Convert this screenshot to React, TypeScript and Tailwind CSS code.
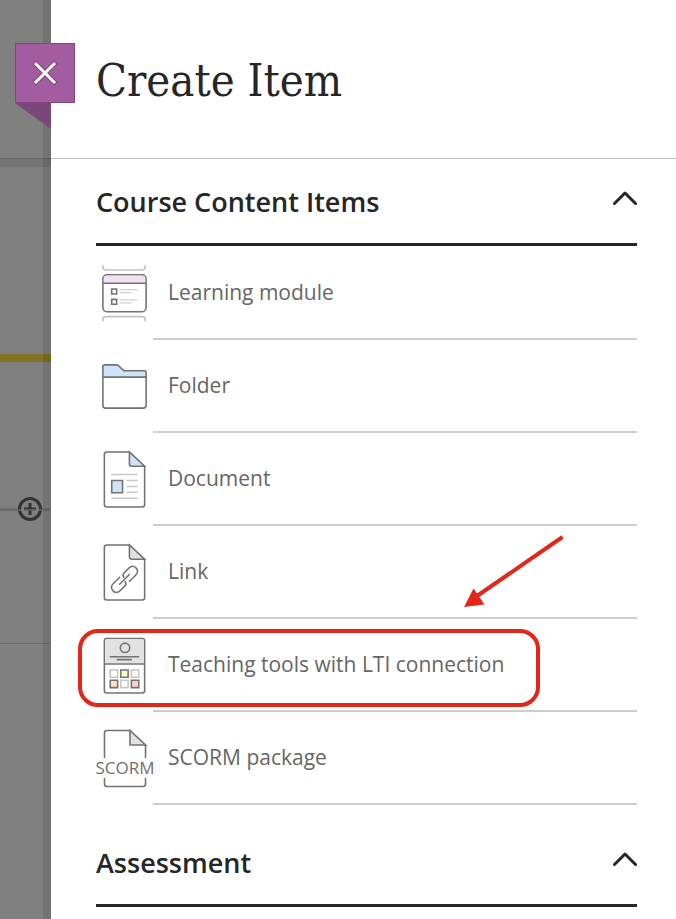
import type { ReactNode } from 'react'

interface Item {
  label: string
  icon: ReactNode
  highlighted?: boolean
}

const LearningModuleIcon = () => (
  <svg width="58" height="60" viewBox="0 0 58 60" fill="none" stroke="#737373" strokeWidth="1.600" aria-hidden="true">
    <path d="M7 .5v2q0 3 3 3h37q3 0 3-3v-2M7 58v-2q0-3 3-3h37q3 0 3 3v2" stroke="#c4c4c4" />
    <rect x="7" y="10.500" width="44" height="37.500" rx="4" fill="#fff" />
    <path d="M8 18.500V14q0-2.600 2.600-2.600h36.800q2.600 0 2.600 2.600v4.500z" fill="#f1e0f4" stroke="none" />
    <path d="M7 19h44" />
    <path d="M16 25h5v5h-5zM16 35.500h5v5h-5z" />
    <path d="M24 25.500h18M24 28.500h12M24 36h18M24 39h12" stroke="#cfcfcf" strokeWidth="1.300" />
  </svg>
)

const FolderIcon = () => (
  <svg width="58" height="60" viewBox="0 0 58 60" fill="none" stroke="#737373" strokeWidth="1.600" aria-hidden="true">
    <path d="M7 20V9.500q0-2 2-2h11q2 0 3 1l5.500 5H49q2 0 2 2V20z" fill="#cfe3fb" />
    <path d="M7 20h44v28.500q0 3-3 3H10q-3 0-3-3z" fill="#fff" />
  </svg>
)

const DocumentIcon = () => (
  <svg width="58" height="60" viewBox="0 0 58 60" fill="none" stroke="#737373" strokeWidth="1.600" aria-hidden="true">
    <path d="M34 1.500H11Q8.500 1.500 8.500 4v51q0 2.500 2.500 2.500h36q2.500 0 2.500-2.500V16.500z" fill="#fff" />
    <path d="M34 1.500v12q0 2.500 2.500 2.500h13z" fill="#cfe3fb" />
    <path d="M15.500 24.500h27M31 30.500h11.500M31 36.500h11.500M31 42.500h11.500M15.500 48.500h27" stroke="#c9c9c9" strokeWidth="1.500" />
    <path d="M16 30.500h11V43H16z" fill="#cfe3fb" />
  </svg>
)

const LinkIcon = () => (
  <svg width="58" height="60" viewBox="0 0 58 60" fill="none" stroke="#737373" strokeWidth="1.600" aria-hidden="true">
    <path d="M34 1.500H11Q8.500 1.500 8.500 4v51q0 2.500 2.500 2.500h36q2.500 0 2.500-2.500V16.500z" fill="#fff" />
    <path d="M34 1.500v12q0 2.500 2.500 2.500h13z" fill="#e2e2e2" />
    <g transform="translate(29 36.500) rotate(-45)" strokeLinecap="round">
      <path d="M-2-5H-11q-5.500 0-5.500 5t5.500 5h6q3.500 0 4-3" />
      <path d="M2 5h9q5.500 0 5.500-5t-5.500-5H5q-3.500 0-4 3" />
      <path d="M-7 0H7" />
    </g>
  </svg>
)

const LtiIcon = () => (
  <svg width="58" height="60" viewBox="0 0 58 60" fill="none" stroke="#737373" strokeWidth="1.600" aria-hidden="true">
    <rect x="8.500" y="2" width="41" height="55.500" rx="2.500" fill="#fff" />
    <path d="M9.300 27.500V4q0-1.200 1.200-1.200h37q1.200 0 1.200 1.200v23.500z" fill="#e2e2e2" stroke="none" />
    <path d="M8.500 28h41M14 20.500h30M21 23.500h15.500" />
    <circle cx="29.500" cy="11.500" r="4.800" />
    <path d="M14.500 34h7.500v7.500h-7.500zM36 34h7.500v7.500H36zM25.200 44.500h7.500V52h-7.500z" stroke="#c4c4c4" />
    <path d="M25.200 34h7.500v7.500h-7.500z" fill="#fdfcc8" />
    <path d="M14.500 44.500h7.500V52h-7.500z" fill="#fde3c4" />
    <path d="M36 44.500h7.500V52H36z" fill="#fdd0d4" />
  </svg>
)

const ScormIcon = () => (
  <svg
    width="58"
    height="60"
    viewBox="0 0 58 60"
    fill="none"
    stroke="#737373"
    strokeWidth="1.600"
    className="shrink-0 overflow-visible"
    aria-hidden="true"
  >
    <path d="M8.500 29V4q0-2.500 2.500-2.500h23l15.500 15V29M8.500 49v6q0 2.500 2.500 2.500h36q2.500 0 2.500-2.500v-6" />
    <path d="M34 1.500V16h15.500z" fill="#e2e2e2" />
    <text x="29" y="45" textAnchor="middle" fontSize="17" fill="#6f6f6f" stroke="none">SCORM</text>
  </svg>
)

const contentItems: Item[] = [
  { label: 'Learning module', icon: <LearningModuleIcon /> },
  { label: 'Folder', icon: <FolderIcon /> },
  { label: 'Document', icon: <DocumentIcon /> },
  { label: 'Link', icon: <LinkIcon /> },
  { label: 'Teaching tools with LTI connection', icon: <LtiIcon />, highlighted: true },
  { label: 'SCORM package', icon: <ScormIcon /> },
]

function SectionHeader({ title }: { title: string }) {
  return (
    <h2 className="border-b-3 border-[#262626]">
      <button
        type="button"
        aria-expanded="true"
        className="flex h-21 w-full items-center justify-between pt-0.5 text-left text-[27px] font-semibold text-[#262626]"
      >
        {title}
        <svg className="mb-2" width="24" height="16" viewBox="0 0 24 16" fill="none" aria-hidden="true">
          <path d="M1.500 13.500 12 3l10.500 10.500" stroke="#262626" strokeWidth="3" strokeLinecap="round" strokeLinejoin="round" />
        </svg>
      </button>
    </h2>
  )
}

function Callout() {
  return (
    <>
      <div className="pointer-events-none absolute -left-[18px] top-[10px] h-[78px] w-[462px] rounded-[20px] border-4 border-[#e22718]" />
      <svg
        className="pointer-events-none absolute left-[368px] -top-[84px]"
        width="102"
        height="76"
        viewBox="0 0 102 76"
        aria-hidden="true"
      >
        <path d="M98.500 2 13 61" stroke="#e22718" strokeWidth="4" />
        <path d="M0 72 9.500 53.500 20.500 69.500z" fill="#e22718" />
      </svg>
    </>
  )
}

function ItemRow({ item }: { item: Item }) {
  return (
    <li className="relative">
      <button type="button" className="flex w-full items-stretch text-left">
        <span className="flex w-[57px] shrink-0 items-center">{item.icon}</span>
        <span className="flex h-[93px] flex-1 items-center border-b-2 border-[#cdcdcd] pl-[15px] text-[21px] text-[#666]">
          {item.label}
        </span>
      </button>
      {item.highlighted && <Callout />}
    </li>
  )
}

// Dimmed course page that stays visible beside the panel
function Backdrop() {
  return (
    <div className="relative flex w-[51px] shrink-0 flex-col bg-[#808080]" aria-hidden="true">
      <div className="h-[158px]" />
      <div className="h-[9px] border-t border-[#666] bg-[#747474]" />
      <div className="h-[187px]" />
      <div className="h-2 bg-[#807323]" />
      <div className="mt-[135px] flex h-6 items-center">
        <div className="flex h-[3px] flex-1 items-center bg-[#6c6c6c] pl-[18px]">
          <svg width="24" height="24" viewBox="0 0 24 24" fill="none" stroke="#333" className="shrink-0">
            <circle cx="12" cy="12" r="10.500" strokeWidth="3" fill="#808080" />
            <path d="M6 12h12M12 6v12" strokeWidth="3" />
            <path d="M0 13h24" stroke="#808080" strokeWidth="1" />
          </svg>
        </div>
      </div>
      <div className="mt-[122px] h-px bg-[#6c6c6c]" />
      <div className="absolute inset-y-0 right-0 w-2 bg-black/10" />
    </div>
  )
}

export default function App() {
  return (
    <div className="flex min-h-screen bg-white font-['Open_Sans','Noto_Sans',sans-serif]">
      <Backdrop />
      <main className="min-w-0 flex-1">
        <header className="relative flex h-[159px] items-center border-b border-[#bdbdbd] pl-[45px] pt-1">
          <button
            type="button"
            aria-label="Close"
            className="absolute -left-9 top-[43px] flex size-[60px] items-center justify-center border border-[#7f4780] bg-[#a35c9f]"
          >
            <svg width="26" height="26" viewBox="0 0 26 26" strokeLinecap="square" aria-hidden="true">
              <path d="m4 4 18 18M22 4 4 22" stroke="#7f4780" strokeWidth="5" />
              <path d="m4 4 18 18M22 4 4 22" stroke="#fff" strokeWidth="3" />
            </svg>
          </button>
          <svg className="absolute -left-9 top-[103px]" width="36" height="26" viewBox="0 0 36 26" aria-hidden="true">
            <path d="M0 0h36v26z" fill="#7b4779" />
          </svg>
          <h1 className="font-['DejaVu_Serif_Condensed','DejaVu_Serif',serif] text-[45px] text-[#262626]">Create Item</h1>
        </header>
        <div className="pl-[45px] pr-[39px]">
          <section>
            <SectionHeader title="Course Content Items" />
            <ul className="pt-px">
              {contentItems.map((item) => (
                <ItemRow key={item.label} item={item} />
              ))}
            </ul>
          </section>
          <section className="mt-[15px]">
            <SectionHeader title="Assessment" />
          </section>
        </div>
      </main>
    </div>
  )
}
